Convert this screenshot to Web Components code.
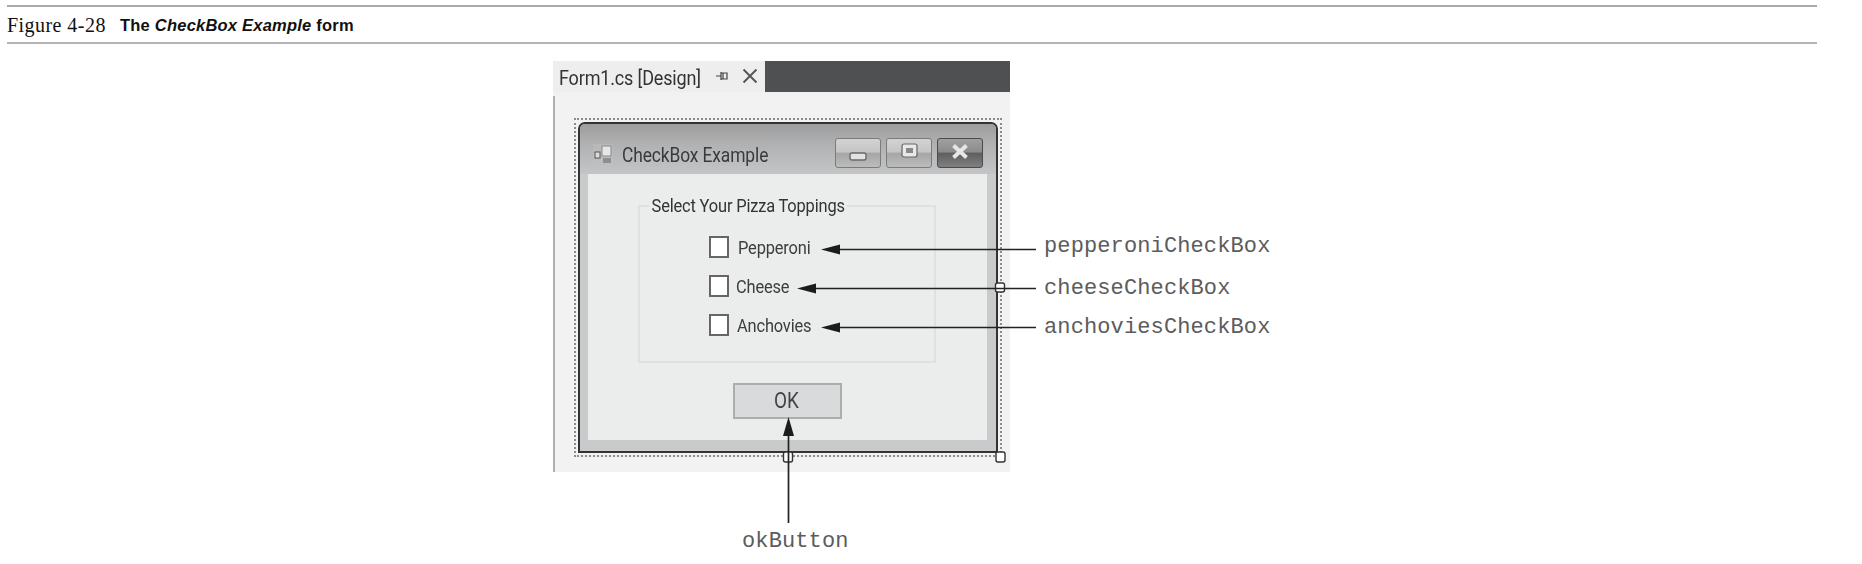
<!DOCTYPE html>
<html lang="en"><head><meta charset="utf-8"><title>CheckBox Example</title>
<style>
html,body{margin:0;background:#fff}
body{position:relative;width:1862px;height:564px;overflow:hidden}
</style></head><body>
<fig-caption><span slot="num">Figure 4-28</span>The <i>CheckBox Example</i> form</fig-caption>
<form-figure>
  <win-form title-text="CheckBox Example">
    <group-box legend="Select Your Pizza Toppings">
      <check-item style="--tx:9px">Pepperoni</check-item>
      <check-item style="--tx:7px">Cheese</check-item>
      <check-item style="--tx:8px">Anchovies</check-item>
    </group-box>
    <push-button>OK</push-button>
  </win-form>
</form-figure>
<fig-callouts></fig-callouts>
<script>
function def(name, html, init){
  customElements.define(name, class extends HTMLElement{
    constructor(){super();this.attachShadow({mode:'open'}).innerHTML=html;}
    connectedCallback(){init&&init(this);}
  });
}
def('fig-caption',`<style>
:host{display:flex;align-items:center;box-sizing:border-box;margin:5px 0 0 7px;width:1810px;height:39px;border-top:2px solid #a9a9a9;border-bottom:2px solid #b4b4b4;padding-top:2px}
.n{font:20px "Liberation Serif",serif;color:#111;width:113px;letter-spacing:.45px}
.t{font:bold 16.500px "Liberation Sans",sans-serif;color:#111;letter-spacing:.22px}
</style><span class="n"><slot name="num"></slot></span><span class="t"><slot></slot></span>`);

def('form-figure',`<style>
:host{display:block;margin:17px 0 0 553px;width:457px;height:411px;font-family:Roboto,sans-serif;filter:blur(.45px)}
.tabs{display:flex;height:31px;background:#4f5051}
.tab{flex:none;box-sizing:border-box;width:212px;background:#eeeeee;display:flex;align-items:center;padding:2px 0 0 6px;color:#333;white-space:nowrap}
.lbl{flex:none;width:156px}
.lbl span{display:inline-block;font-size:20.500px;letter-spacing:-.2px;transform:scaleX(.88);transform-origin:0 50%}
.tab svg{flex:none}
.gap{height:4px;background:#f1f1f1}
.surface{box-sizing:border-box;height:376px;background:#f2f2f2;border-left:2px solid #b0b0b0;padding:22px 0 0 19px}
.sel{box-sizing:border-box;width:428px;height:339px;border:2px dotted #8c8c8c;padding:2px}
</style>
<div class="tabs"><div class="tab"><span class="lbl"><span>Form1.cs [Design]</span></span>
<svg width="14" height="12" viewBox="0 0 14 12" style="margin-top:-3px"><path d="M1 6h5M6 2v8M6 3h6v6H6M8 9V3" fill="none" stroke="#444" stroke-width="1.200"/></svg>
<svg width="16" height="16" viewBox="0 0 16 16" style="margin:-4px 0 0 13px"><path d="M1.500 1.500l13 13M14.500 1.500l-13 13" stroke="#555" stroke-width="1.900"/></svg>
</div></div><div class="gap"></div>
<div class="surface"><div class="sel"><slot></slot></div></div>`);

def('win-form',`<style>
:host{display:block;box-sizing:border-box;width:420px;height:331px;border:2px solid #333;border-radius:7px 7px 0 0;background:#c9cacb;padding:0 9px 10px 8px}
.bar{display:flex;align-items:flex-end;height:50px;margin:0 -9px 0 -8px;padding:0 13px 6px 13px;background:linear-gradient(#9d9d9e,#b0b1b2 40%,#c4c5c6);border-radius:5px 5px 0 0;box-sizing:border-box}
.ico{flex:none;margin:0 9px 3px 0}
.ttl{flex:1;font:20.500px/26px Roboto,sans-serif;letter-spacing:-.15px;color:#3a3a3a;white-space:nowrap}
.ttl span{display:inline-block;transform:scaleX(.85);transform-origin:0 50%}
.btns{display:flex;gap:5px}
.b{box-sizing:border-box;height:30px;border:1.500px solid #7b7b7b;border-radius:3px;display:flex;align-items:center;justify-content:center;background:linear-gradient(#d2d2d2 0,#c6c6c6 45%,#a6a6a6 52%,#bcbcbc 100%)}
.b.x{background:linear-gradient(#a0a0a0 0,#8c8c8c 45%,#5f5f5f 52%,#808080 100%);border-color:#4a4a4a}
.client{box-sizing:border-box;height:266px;background:#ebecec;padding:31px 0 0 50px}
</style>
<div class="bar">
<svg class="ico" width="20" height="21" viewBox="0 0 20 21"><rect width="20" height="21" fill="#c4c4c4" opacity=".35"/><rect x="9" y="2" width="9" height="10" fill="#e6e6e6" stroke="#8a8a8a"/><rect x="2" y="8" width="5" height="6" fill="#ddd" stroke="#555"/><rect x="10" y="14" width="8" height="5" fill="#8f8f8f"/></svg>
<span class="ttl"><span></span></span>
<div class="btns">
<div class="b" style="width:46px"><svg width="18" height="9" viewBox="0 0 18 9" style="margin-top:7px"><rect x="1" y="1" width="16" height="7" rx="2" fill="#e2e2e2" stroke="#6a6a6a" stroke-width="1.400"/></svg></div>
<div class="b" style="width:46px"><svg width="17" height="15" viewBox="0 0 17 15" style="margin-top:-5px"><rect x="1" y="1" width="15" height="13" rx="2" fill="#e8e8e8" stroke="#666" stroke-width="1.200"/><rect x="5" y="5" width="7" height="5" fill="#888"/></svg></div>
<div class="b x" style="width:46px"><svg width="18" height="15" viewBox="0 0 18 15" style="margin-top:-4px"><path d="M2.500 1.500l13 12M15.500 1.500l-13 12" stroke="#e6e6e6" stroke-width="4"/></svg></div>
</div></div>
<div class="client"><slot></slot></div>`,
el=>{el.shadowRoot.querySelector('.ttl span').textContent=el.getAttribute('title-text');});

def('group-box',`<style>
:host{display:block;position:relative;box-sizing:border-box;width:298px;height:158px;border:2px solid #dfe0e0;padding:29px 0 0 69px}
.lg{position:absolute;left:9px;top:-13px;background:#ebecec;padding:0 3px;font:19px Roboto,sans-serif;letter-spacing:-.2px;color:#333;white-space:nowrap;line-height:24px;transform:scaleX(.865);transform-origin:0 50%}
.rows{display:flex;flex-direction:column;gap:17px}
</style><span class="lg"></span><div class="rows"><slot></slot></div>`,
el=>{el.shadowRoot.querySelector('.lg').textContent=el.getAttribute('legend');});

def('check-item',`<style>
:host{display:flex;align-items:center;height:22px;font:19px Roboto,sans-serif;letter-spacing:-.2px;color:#3d3d3d;white-space:nowrap}
.box{flex:none;box-sizing:border-box;width:20px;height:22px;background:#fff;border:2px solid #666;margin-right:var(--tx,8px)}
.t{display:inline-block;transform:scaleX(.865);transform-origin:0 50%}
</style><span class="box"></span><span class="t"><slot></slot></span>`);

def('push-button',`<style>
:host{display:flex;align-items:center;justify-content:center;box-sizing:border-box;width:109px;height:36px;margin:20px 0 0 95px;padding-bottom:2px;background:#d9dadb;border:2px solid #adadad;font:22px Roboto,sans-serif;color:#444}
.t{display:inline-block;transform:scaleX(.86);margin-left:-3px}
</style><span class="t"><slot></slot></span>`);

def('fig-callouts',`<style>
:host{position:absolute;inset:0;display:block;pointer-events:none}
svg{position:absolute;left:0;top:0;filter:blur(.3px)}
span{position:absolute;font:22px/26px "Liberation Mono",monospace;letter-spacing:.12px;color:#5c5c5c;white-space:nowrap}
</style>
<svg width="1862" height="564" viewBox="0 0 1862 564">
<g fill="#fff" stroke="#333" stroke-width="1.400">
<rect x="995.500" y="283" width="9" height="9" rx="2"/>
<rect x="783.500" y="452" width="9" height="10" rx="2"/>
<rect x="996" y="452" width="9" height="10" rx="2"/>
</g>
<g stroke="#222" stroke-width="1.700" fill="none">
<path d="M838 249.500H1036M813 288.500H1036M838 327.500H1036M788.500 434V523"/>
</g>
<g fill="#1c1c1c">
<path d="M821 249.500L840 244.500V254.500Z"/>
<path d="M797 288.500L816 283.500V293.500Z"/>
<path d="M821 327.500L840 322.500V332.500Z"/>
<path d="M788.500 417L783 436H794Z"/>
</g>
</svg>
<span style="left:1044px;top:234px">pepperoniCheckBox</span>
<span style="left:1044px;top:276px">cheeseCheckBox</span>
<span style="left:1044px;top:315px">anchoviesCheckBox</span>
<span style="left:742px;top:529px">okButton</span>`);
</script>
</body></html>
